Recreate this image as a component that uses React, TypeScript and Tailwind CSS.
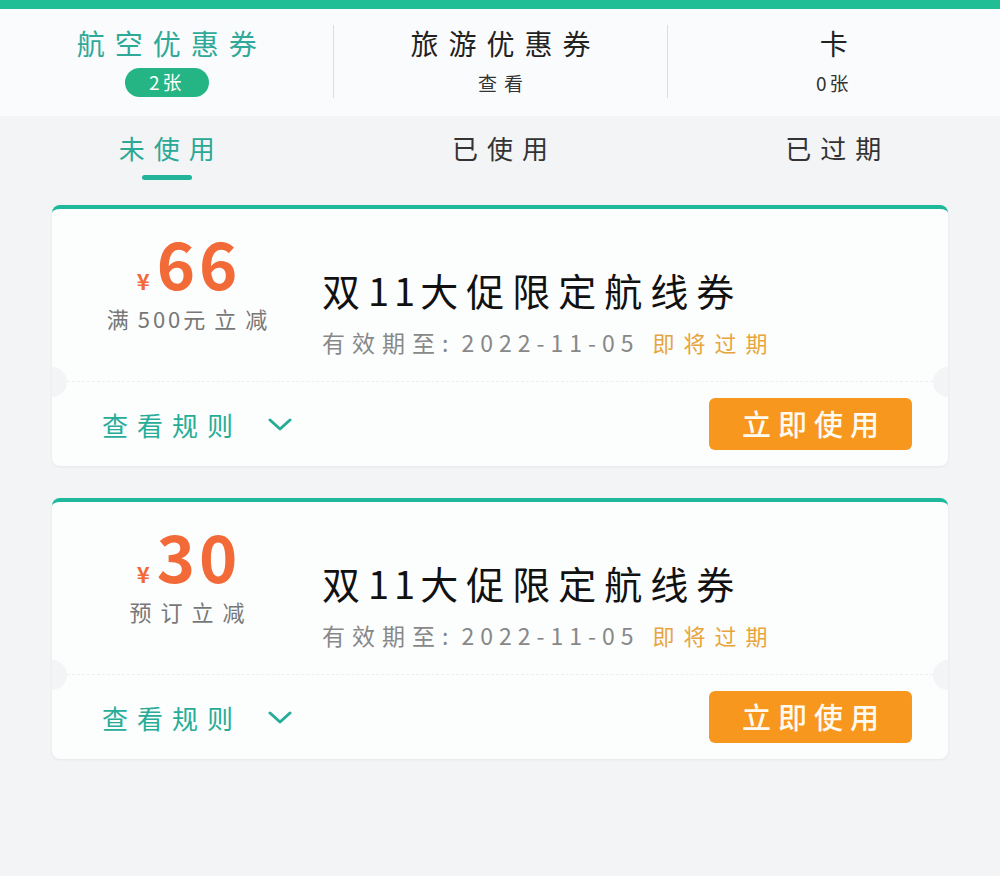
import React from 'react'

const coupons = [
  { amount: '66', note: ['满', '500', '元立减'] },
  { amount: '30', note: ['预订立减'] },
]

const Chevron = () => (
  <svg width="24" height="14" viewBox="0 0 24 14" fill="none">
    <polyline
      points="2,2 12,11 22,2"
      stroke="#27ad97"
      strokeWidth="3"
      strokeLinecap="round"
      strokeLinejoin="round"
    />
  </svg>
)

const CouponCard = ({ amount, note }: { amount: string; note: string[] }) => (
  <div className="bg-[#fcfdfd] rounded-lg border-t-4 border-[#1db99a] overflow-hidden shadow-[0_1px_3px_rgba(0,0,0,0.06)]">
    <div className="flex h-[172px]">
      <div className="w-[270px] flex flex-col items-center pt-[20px]">
        <div className="flex items-baseline text-[#f26a38] font-bold mr-[-4px]">
          <span className="text-[22px] mr-[7px]">¥</span>
          <span className="text-[65px] leading-[66px] tracking-[4px]">{amount}</span>
        </div>
        <p className="mt-[8px] text-[22px] leading-[26px] text-[#777] mr-[-9px]">
          {note.map((n) =>
            /\d/.test(n) ? (
              <span key={n} className="tracking-[3px]">{n}</span>
            ) : (
              <span key={n} className="tracking-[9px]">{n}</span>
            )
          )}
        </p>
      </div>
      <div className="pt-[59px]">
        <h3 className="text-[38px] leading-[44px] text-[#111] tracking-[8px]">
          双<span className="tracking-[5px]">11</span>大促限定航线券
        </h3>
        <p className="mt-[16px] text-[23px] leading-[28px] text-[#888] flex items-center">
          <span className="tracking-[7px]">有效期至:</span>
          <span className="ml-[6px] tracking-[6px]">2022-11-05</span>
          <span className="ml-[13px] text-[22px] text-[#e7a53d] tracking-[9px]">即将过期</span>
        </p>
      </div>
    </div>
    <div className="relative h-[85px] border-t border-dashed border-[#eceef0] flex items-center justify-between pl-[50px] pr-[36px]">
      <div className="absolute -left-[15px] -top-[15px] size-[30px] rounded-full bg-[#f3f4f6]" />
      <div className="absolute -right-[15px] -top-[15px] size-[30px] rounded-full bg-[#f3f4f6]" />
      <div className="flex items-center">
        <span className="text-[26px] text-[#27ad97] tracking-[9px]">查看规则</span>
        <span className="ml-[26px] mt-[2px]">
          <Chevron />
        </span>
      </div>
      <button className="w-[203px] h-[52px] rounded-md bg-[#f7971e] text-[#fffaf0] text-[29px] font-medium tracking-[7px] pl-[7px] flex items-center justify-center">
        立即使用
      </button>
    </div>
  </div>
)

export default function App() {
  return (
    <div className="min-h-screen bg-[#f3f4f6] font-['Noto_Sans_CJK_SC','Noto_Sans',sans-serif]">
      <div className="h-[9px] bg-[#1fbe94]" />
      <div className="h-[107px] bg-[#fafbfc] grid grid-cols-3 items-center pb-[3px]">
        <div className="flex flex-col items-center">
          <span className="text-[28px] leading-[34px] text-[#2fa999] tracking-[10px] mr-[-10px]">航空优惠券</span>
          <span className="mt-[8px] w-[84px] h-[29px] rounded-full bg-[#25b584] text-white text-[19px] tracking-[3px] flex items-center justify-center">
            2张
          </span>
        </div>
        <div className="flex flex-col items-center border-l border-[#dcdde0] py-[1px]">
          <span className="text-[28px] leading-[34px] text-[#222] tracking-[10px] mr-[-10px]">旅游优惠券</span>
          <span className="mt-[8px] h-[29px] text-[19px] leading-[29px] text-[#333] tracking-[7px] mr-[-7px]">查看</span>
        </div>
        <div className="flex flex-col items-center border-l border-[#dcdde0] py-[1px]">
          <span className="text-[28px] leading-[34px] text-[#222]">卡</span>
          <span className="mt-[8px] h-[29px] text-[19px] leading-[29px] text-[#333] tracking-[3px]">0张</span>
        </div>
      </div>

      <div className="grid grid-cols-3 pt-[16px]">
        {['未使用', '已使用', '已过期'].map((t, i) => (
          <div key={t} className="flex flex-col items-center">
            <span
              className={
                i === 0
                  ? 'text-[26px] leading-[32px] text-[#2aa996] tracking-[9px] mr-[-9px]'
                  : 'text-[26px] leading-[32px] text-[#333] tracking-[9px] mr-[-9px]'
              }
            >
              {t}
            </span>
            <span
              className={
                i === 0
                  ? 'mt-[11px] w-[50px] h-[5px] rounded-full bg-[#22b39b]'
                  : 'mt-[11px] w-[50px] h-[5px]'
              }
            />
          </div>
        ))}
      </div>

      <div className="px-[52px] pt-[25px] flex flex-col gap-[32px]">
        {coupons.map((c) => (
          <CouponCard key={c.amount} amount={c.amount} note={c.note} />
        ))}
      </div>
    </div>
  )
}
